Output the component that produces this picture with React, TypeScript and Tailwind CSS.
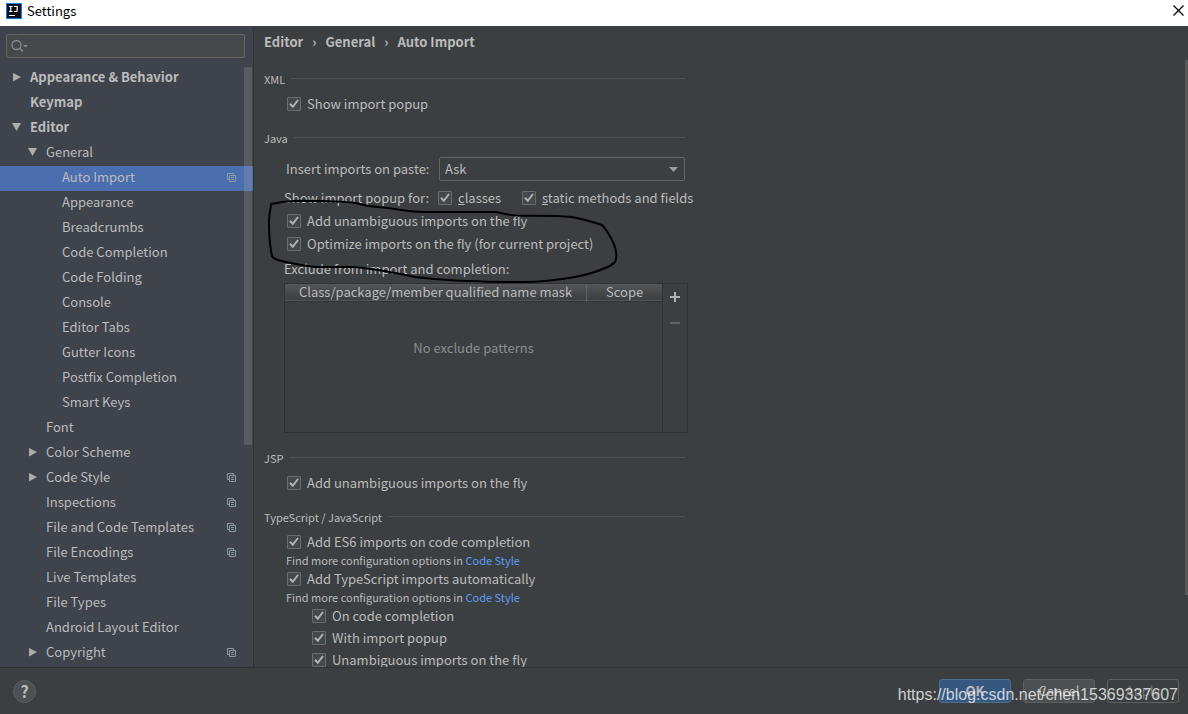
import { useId, useState } from 'react'
import type { ReactNode } from 'react'
import clsx from 'clsx'

type TreeItem = {
  label: string
  level: 0 | 1 | 2
  state?: 'open' | 'closed'
  project?: boolean
}

const tree: TreeItem[] = [
  { label: 'Appearance & Behavior', level: 0, state: 'closed' },
  { label: 'Keymap', level: 0 },
  { label: 'Editor', level: 0, state: 'open' },
  { label: 'General', level: 1, state: 'open' },
  { label: 'Auto Import', level: 2, project: true },
  { label: 'Appearance', level: 2 },
  { label: 'Breadcrumbs', level: 2 },
  { label: 'Code Completion', level: 2 },
  { label: 'Code Folding', level: 2 },
  { label: 'Console', level: 2 },
  { label: 'Editor Tabs', level: 2 },
  { label: 'Gutter Icons', level: 2 },
  { label: 'Postfix Completion', level: 2 },
  { label: 'Smart Keys', level: 2 },
  { label: 'Font', level: 1 },
  { label: 'Color Scheme', level: 1, state: 'closed' },
  { label: 'Code Style', level: 1, state: 'closed', project: true },
  { label: 'Inspections', level: 1, project: true },
  { label: 'File and Code Templates', level: 1, project: true },
  { label: 'File Encodings', level: 1, project: true },
  { label: 'Live Templates', level: 1 },
  { label: 'File Types', level: 1 },
  { label: 'Android Layout Editor', level: 1 },
  { label: 'Copyright', level: 1, state: 'closed', project: true },
]

const indent = { 0: 'pl-3', 1: 'pl-7', 2: 'pl-11' }

function Arrow({ state }: { state?: 'open' | 'closed' }) {
  return (
    <svg viewBox="0 0 10 10" className="size-[10px] shrink-0 fill-[#adadad]" aria-hidden="true">
      {state === 'closed' && <path d="M1 1 L9 5 L1 9.5 Z" />}
      {state === 'open' && <path d="M0 1 H9 L4.5 9 Z" />}
    </svg>
  )
}

function ProjectIcon() {
  return (
    <svg viewBox="0 0 9 9" className="size-[9px] shrink-0" fill="none" stroke="#8a98a3" aria-hidden="true">
      <path d="M2 6.5 H0.5 V0.5 H6.5 V2" />
      <path d="M2.5 2.5 H8.5 V8.5 H2.5 Z" />
      <path d="M4 4.5 H7 M4 6.5 H7" />
    </svg>
  )
}

function Sidebar() {
  const [selected, setSelected] = useState('Auto Import')

  return (
    <aside className="flex w-[254px] shrink-0 flex-col border-r border-[#323232] bg-[#3f434c]">
      <div className="px-[6px] py-2 pr-2">
        <label className="flex h-6 items-center rounded-[2px] border border-[#646464] bg-[#45494a] px-1">
          <svg viewBox="0 0 18 14" className="h-[14px] w-[18px] shrink-0" fill="none" stroke="#7f8b91" aria-hidden="true">
            <circle cx="5.5" cy="6" r="4.5" strokeWidth="1.3" />
            <path d="M8.7 9.2 L12 12.5" strokeWidth="1.6" />
            <path d="M12 6 H17 L14.5 8.5 Z" fill="#7f8b91" stroke="none" />
          </svg>
          <input type="text" aria-label="Search settings" className="min-w-0 flex-1 bg-transparent pl-1 outline-none" />
        </label>
      </div>
      <div className="relative min-h-0 flex-1 overflow-hidden">
        <ul>
          {tree.map((item) => (
            <li key={item.label}>
              <button
                type="button"
                onClick={() => setSelected(item.label)}
                className={clsx(
                  'flex h-[25px] w-full items-center gap-2 pr-[17px] pb-[3px] text-left',
                  indent[item.level],
                  item.level === 0 && 'font-bold',
                  selected === item.label && 'bg-[#4b6eaf]',
                )}
              >
                <Arrow state={item.state} />
                <span className="flex-1">{item.label}</span>
                {item.project && <ProjectIcon />}
              </button>
            </li>
          ))}
        </ul>
        <div className="absolute top-px right-px h-[378px] w-2 bg-[#a6a6a6]/25" />
      </div>
    </aside>
  )
}

function Check({ children }: { children: ReactNode }) {
  const id = useId()
  const [checked, setChecked] = useState(true)

  return (
    <div className="flex h-[22px] items-center gap-[6px]">
      <span className="relative flex">
        <input
          id={id}
          type="checkbox"
          checked={checked}
          onChange={(e) => setChecked(e.target.checked)}
          className="size-[14px] appearance-none rounded-[1px] border border-[#6b6b6b] bg-[#43494a]"
        />
        {checked && (
          <svg viewBox="0 0 14 14" className="pointer-events-none absolute inset-0" fill="none" stroke="#b0b2b3" strokeWidth="2" aria-hidden="true">
            <path d="M3 6.8 L5.8 9.8 L11 3" />
          </svg>
        )}
      </span>
      <label htmlFor={id}>{children}</label>
    </div>
  )
}

function Section({ title, children }: { title: string; children: ReactNode }) {
  return (
    <section>
      <div className="mr-[3px] flex h-[18px] items-center gap-[6px] pb-px">
        <h2 className="text-[11px]">{title}</h2>
        <div className="h-px flex-1 bg-[#515151]" />
      </div>
      {children}
    </section>
  )
}

function MoreOptions() {
  return (
    <p className="-ml-px h-[15px] text-[11px] leading-[14px]">
      Find more configuration options in{' '}
      <a href="#code-style" className="text-[#589df6]">
        Code Style
      </a>
    </p>
  )
}

function ExcludeTable() {
  return (
    <div className="flex h-[150px] border border-[#323232]">
      <div className="flex flex-1 flex-col border-r border-[#323232]">
        <table className="w-full table-fixed border-collapse">
          <thead>
            <tr className="h-[17px] border-b border-[#323232] bg-linear-to-b from-[#53565a] to-[#3c3e40] leading-4">
              <th className="w-4/5 border-r border-[#5f6265] font-normal">Class/package/member qualified name mask</th>
              <th className="font-normal">Scope</th>
            </tr>
          </thead>
        </table>
        <p className="pt-9 text-center text-[#8c8c8c]">No exclude patterns</p>
      </div>
      <div className="flex w-6 flex-col items-center gap-4 pt-2">
        <button type="button" aria-label="Add" className="flex">
          <svg viewBox="0 0 10 10" className="size-[10px]" stroke="#afb1b3" strokeWidth="2" aria-hidden="true">
            <path d="M5 0 V10 M0 5 H10" />
          </svg>
        </button>
        <button type="button" aria-label="Remove" disabled className="flex">
          <svg viewBox="0 0 10 10" className="size-[10px]" stroke="#616365" strokeWidth="2" aria-hidden="true">
            <path d="M0 5 H10" />
          </svg>
        </button>
      </div>
    </div>
  )
}

// freehand loop around the two "on the fly" options
function Marker() {
  return (
    <svg viewBox="264 196 360 90" className="pointer-events-none absolute top-[138px] left-[10px] h-[90px] w-[360px]" fill="none" stroke="#000" strokeWidth="2" strokeLinejoin="round" aria-hidden="true">
      <path d="M271 204 C280 202 289 201 298 200.7 L322 201 L346 202 C354 202 360 204 368 206 L388 208 C400 210 412 212 425 212 L495 212 C502 213 508 215 516 215.5 C535 216 553 215 572 217 C583 219 593 222 602 225 C606 229 610 236 613 242 C616 249 618 256 615 262 C612 265 609 267 605 268 C594 273 585 275 575 277 C558 280 540 282 522 282 C505 282 488 282 472 281 C452 281 434 279 415 277 C402 274 390 272 378 270 C365 268 358 267 350 267 L315 267 C300 265 289 263 278 260 C275 259 273 258 272 256 C270 247 269 236 269 223 C269 216 270 210 271.5 203" />
    </svg>
  )
}

function AutoImport() {
  const pasteId = useId()

  return (
    <main className="flex min-w-0 flex-1 flex-col bg-[#3c3f41]">
      <nav aria-label="Breadcrumb" className="flex h-8 shrink-0 items-center gap-[9px] pl-[10px] font-bold">
        <span>Editor</span>
        <span>›</span>
        <span>General</span>
        <span>›</span>
        <span>Auto Import</span>
      </nav>
      <div className="relative min-h-0 flex-1 overflow-hidden">
        <div className="flex w-[434px] flex-col gap-[14px] pt-3 pl-[10px]">
          <Section title="XML">
            <div className="pt-[5px] pl-[23px]">
              <Check>Show import popup</Check>
            </div>
          </Section>

          <Section title="Java">
            <div className="flex items-center justify-between pt-[10px] pr-[3px] pl-[22px]">
              <label htmlFor={pasteId}>Insert imports on paste:</label>
              <div className="relative">
                <select
                  id={pasteId}
                  defaultValue="Ask"
                  className="block h-6 w-[246px] appearance-none rounded-[2px] border border-[#646464] bg-[#3c3f41] px-[5px]"
                >
                  <option>All</option>
                  <option>Ask</option>
                  <option>None</option>
                </select>
                <svg viewBox="0 0 9 5" className="pointer-events-none absolute top-[10px] right-[7px] h-[5px] w-[9px] fill-[#9a9da0]" aria-hidden="true">
                  <path d="M0 0 H9 L4.5 5 Z" />
                </svg>
              </div>
            </div>
            <div className="flex h-7 items-end pl-5">
              <span className="flex h-[22px] w-[154px] shrink-0 items-center">Show import popup for:</span>
              <div className="w-[84px] shrink-0">
                <Check>
                  <u>c</u>lasses
                </Check>
              </div>
              <div className="whitespace-nowrap">
                <Check>
                  <u>s</u>tatic methods and fields
                </Check>
              </div>
            </div>
            <div className="flex flex-col gap-px pt-px pl-[23px]">
              <Check>Add unambiguous imports on the fly</Check>
              <Check>Optimize imports on the fly (for current project)</Check>
            </div>
            <div className="pt-1 pb-[2px] pl-5">
              <p className="pb-1 leading-5">Exclude from import and completion:</p>
              <ExcludeTable />
            </div>
          </Section>

          <Section title="JSP">
            <div className="pt-[5px] pl-[23px]">
              <Check>Add unambiguous imports on the fly</Check>
            </div>
          </Section>

          <Section title="TypeScript / JavaScript">
            <div className="pt-[5px] pl-[23px]">
              <Check>Add ES6 imports on code completion</Check>
              <MoreOptions />
              <Check>Add TypeScript imports automatically</Check>
              <MoreOptions />
              <div className="pl-[25px]">
                <Check>On code completion</Check>
                <Check>With import popup</Check>
                <Check>Unambiguous imports on the fly</Check>
              </div>
            </div>
          </Section>
        </div>
        <Marker />
        <div className="absolute top-[2px] right-0 h-[535px] w-[3px] bg-[#5b5a59]" />
      </div>
    </main>
  )
}

function Footer() {
  return (
    <footer className="relative flex h-[47px] shrink-0 items-center justify-between border-t border-[#323232] bg-[#3c3f41] pr-[9px] pl-[13px]">
      <button type="button" aria-label="Help" className="size-[23px] rounded-full border border-[#5e6060] bg-[#4c5052] text-[16px] leading-5 font-bold">
        ?
      </button>
      <div className="flex gap-3">
        <button type="button" className="h-6 w-[72px] rounded-[3px] border border-[#4c708c] bg-[#365880] font-bold">
          OK
        </button>
        <button type="button" className="h-6 w-[72px] rounded-[3px] border border-[#5e6060] bg-[#4c5052]">
          Cancel
        </button>
        <button type="button" disabled className="h-6 w-[72px] rounded-[3px] border border-[#5e6060] text-[#777777]">
          Apply
        </button>
      </div>
      <span className="pointer-events-none absolute right-[10px] bottom-[7px] font-['Liberation_Sans',sans-serif] text-[16px] leading-6 text-white/75">
        https://blog.csdn.net/chen15369337607
      </span>
    </footer>
  )
}

export default function App() {
  return (
    <div className="flex h-screen flex-col overflow-hidden bg-[#3c3f41] font-['Noto_Sans_CJK_SC',sans-serif] text-[13px] leading-5 text-[#bbbbbb]">
      <header className="flex h-[26px] shrink-0 items-center justify-between bg-white pr-1 pb-[5px] pl-[6px] text-black">
        <div className="flex items-center gap-[5px]">
          <svg viewBox="0 0 16 16" className="size-4" aria-hidden="true">
            <rect width="16" height="16" fill="#087cfa" />
            <rect x="1" y="1" width="14" height="14" fill="#111" />
            <path d="M3 3.5 H6.5 M4.75 3.5 V8.5 M3 8.5 H6.5 M8 3.5 H11.2 V7.2 Q11.2 8.5 9.8 8.5 H8 M3 12.5 H9" fill="none" stroke="#fff" strokeWidth="1.2" />
          </svg>
          <h1>Settings</h1>
        </div>
        <button type="button" aria-label="Close" className="flex">
          <svg viewBox="0 0 11 11" className="size-[11px]" stroke="#000" strokeWidth="1.2" aria-hidden="true">
            <path d="M0.5 0.5 L10.5 10.5 M10.5 0.5 L0.5 10.5" />
          </svg>
        </button>
      </header>
      <div className="flex min-h-0 flex-1">
        <Sidebar />
        <AutoImport />
      </div>
      <Footer />
    </div>
  )
}
